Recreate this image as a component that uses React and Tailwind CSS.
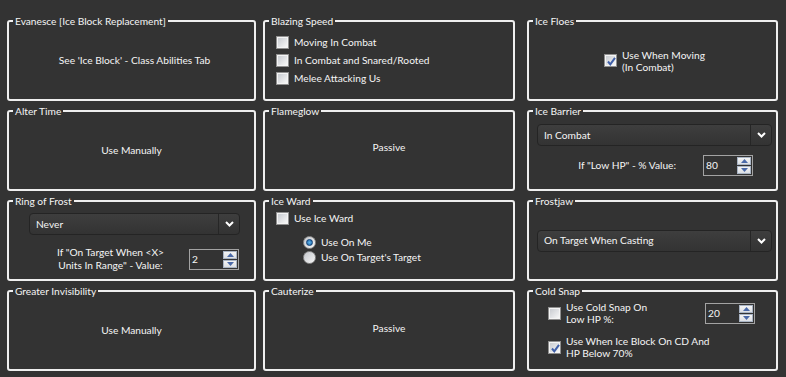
import React from "react";

function Check({ checked }) {
  return (
    <span className="relative flex h-[13px] w-[13px] shrink-0 items-center justify-center border border-[#8f8f8f] bg-[#f4f4f4] p-[1px]">
      <span className="block h-full w-full bg-linear-to-br from-[#c9ccd1] to-[#f7f7f7]" />
      {checked && (
        <svg className="absolute left-[1px] top-[1px]" width="11" height="11" viewBox="0 0 11 11">
          <path d="M2 5.5 L4.3 8.3 L9 1.8" fill="none" stroke="#3f5fa8" strokeWidth="2" />
        </svg>
      )}
    </span>
  );
}

function Radio({ checked }) {
  return (
    <span className="flex h-[13px] w-[13px] shrink-0 items-center justify-center rounded-full border border-[#8f8f8f] bg-linear-to-br from-[#c4c7cc] to-[#f5f5f5]">
      {checked && (
        <span className="block h-[7px] w-[7px] rounded-full border border-[#0e3f75] bg-radial from-[#5fb6ec] to-[#1a5d9e]" />
      )}
    </span>
  );
}

function Combo({ value, className }) {
  return (
    <div className={`flex h-[22px] items-stretch rounded-[4px] border border-[#242424] bg-linear-to-b from-[#3e3e3e] to-[#333333] ${className}`}>
      <div className="flex flex-1 items-center pl-[6px]">{value}</div>
      <div className="flex w-[21px] items-center justify-center border-l border-[#262626]">
        <svg width="9" height="6" viewBox="0 0 9 6">
          <path d="M1 1 L4.5 4.5 L8 1" fill="none" stroke="#ffffff" strokeWidth="2" />
        </svg>
      </div>
    </div>
  );
}

function Spin({ value }) {
  return (
    <div className="flex h-[21px] w-[50px] shrink-0 border border-[#a3a3a3] bg-[#333333]">
      <div className="flex flex-1 items-center pl-[2px]">{value}</div>
      <div className="flex w-[16px] flex-col gap-[1px] p-[1px]">
        <div className="flex flex-1 items-center justify-center border border-[#a9b4c4] bg-linear-to-b from-[#f4f4f4] to-[#dcdfe4]">
          <svg width="7" height="4" viewBox="0 0 7 4">
            <path d="M0 4 L3.5 0 L7 4 Z" fill="#4a69a8" />
          </svg>
        </div>
        <div className="flex flex-1 items-center justify-center border border-[#a9b4c4] bg-linear-to-b from-[#f4f4f4] to-[#dcdfe4]">
          <svg width="7" height="4" viewBox="0 0 7 4">
            <path d="M0 0 L7 0 L3.5 4 Z" fill="#4a69a8" />
          </svg>
        </div>
      </div>
    </div>
  );
}

function Box({ title, className, children }) {
  return (
    <div className={`relative h-[81px] shrink-0 rounded-[3px] border-2 border-[#efefef] ${className}`}>
      <span className="absolute left-[4px] top-[-8px] whitespace-nowrap bg-[#333333] px-[2px] leading-[14px]">
        {title}
      </span>
      {children}
    </div>
  );
}

export default function App() {
  return (
    <div
      className="flex h-[377px] w-[786px] flex-col gap-[9px] overflow-hidden bg-[#333333] pl-[7px] pt-[20px] text-[10.2px] leading-[13px] text-[#f5f5f5]"
      style={{ fontFamily: "Lato, 'Liberation Sans', sans-serif" }}
    >
      {/* Row 1 */}
      <div className="flex">
        <Box title="Evanesce [Ice Block Replacement]" className="w-[249px]">
          <div className="flex h-full items-center justify-center pl-[6px]">
            See 'Ice Block' - Class Abilities Tab
          </div>
        </Box>
        <Box title="Blazing Speed" className="ml-[7px] w-[252px]">
          <div className="flex flex-col pl-[11px] pt-[11px]">
            <div className="flex h-[18px] items-center gap-[5px]">
              <Check />
              <span>Moving In Combat</span>
            </div>
            <div className="flex h-[18px] items-center gap-[5px]">
              <Check />
              <span>In Combat and Snared/Rooted</span>
            </div>
            <div className="flex h-[18px] items-center gap-[5px]">
              <Check />
              <span>Melee Attacking Us</span>
            </div>
          </div>
        </Box>
        <Box title="Ice Floes" className="ml-[12px] w-[251px]">
          <div className="flex h-full items-center justify-center gap-[5px] pl-[4px]">
            <Check checked />
            <div className="leading-[12px]">
              Use When Moving
              <br />
              (In Combat)
            </div>
          </div>
        </Box>
      </div>

      {/* Row 2 */}
      <div className="flex">
        <Box title="Alter Time" className="w-[249px]">
          <div className="flex h-full items-center justify-center">Use Manually</div>
        </Box>
        <Box title="Flameglow" className="ml-[7px] w-[252px]">
          <div className="flex h-full items-center justify-center pb-[7px]">Passive</div>
        </Box>
        <Box title="Ice Barrier" className="ml-[12px] w-[251px]">
          <div className="flex flex-col pt-[12px]">
            <Combo value="In Combat" className="ml-[8px] mr-[4px]" />
            <div className="mt-[9px] flex items-center justify-end gap-[27px] pr-[23px]">
              <span>If "Low HP" - % Value:</span>
              <Spin value="80" />
            </div>
          </div>
        </Box>
      </div>

      {/* Row 3 */}
      <div className="flex">
        <Box title="Ring of Frost" className="w-[249px]">
          <div className="flex flex-col pt-[11px]">
            <Combo value="Never" className="ml-[20px] mr-[14px]" />
            <div className="mt-[11px] flex items-center justify-end gap-[25px] pr-[15px]">
              <span className="text-center leading-[13px]">
                If "On Target When &lt;X&gt;
                <br />
                Units In Range" - Value:
              </span>
              <Spin value="2" />
            </div>
          </div>
        </Box>
        <Box title="Ice Ward" className="ml-[7px] w-[252px]">
          <div className="flex flex-col pl-[11px] pt-[7px]">
            <div className="flex h-[18px] items-center gap-[5px]">
              <Check />
              <span>Use Ice Ward</span>
            </div>
            <div className="mt-[8px] flex flex-col pl-[27px]">
              <div className="flex h-[15px] items-center gap-[5px]">
                <Radio checked />
                <span>Use On Me</span>
              </div>
              <div className="flex h-[15px] items-center gap-[5px]">
                <Radio />
                <span>Use On Target's Target</span>
              </div>
            </div>
          </div>
        </Box>
        <Box title="Frostjaw" className="ml-[12px] w-[251px]">
          <div className="flex h-full flex-col justify-center">
            <Combo value="On Target When Casting" className="ml-[8px] mr-[4px]" />
          </div>
        </Box>
      </div>

      {/* Row 4 */}
      <div className="flex">
        <Box title="Greater Invisibility" className="w-[249px]">
          <div className="flex h-full items-center justify-center">Use Manually</div>
        </Box>
        <Box title="Cauterize" className="ml-[7px] w-[252px]">
          <div className="flex h-full items-center justify-center pb-[5px]">Passive</div>
        </Box>
        <Box title="Cold Snap" className="ml-[12px] w-[251px]">
          <div className="flex flex-col pl-[19px] pt-[9px]">
            <div className="flex h-[24px] items-center">
              <Check />
              <span className="ml-[5px] leading-[12px]">
                Use Cold Snap On
                <br />
                Low HP %:
              </span>
              <div className="ml-auto mr-[21px]">
                <Spin value="20" />
              </div>
            </div>
            <div className="mt-[10px] flex h-[24px] items-center">
              <Check checked />
              <span className="ml-[5px] leading-[12px]">
                Use When Ice Block On CD And
                <br />
                HP Below 70%
              </span>
            </div>
          </div>
        </Box>
      </div>
    </div>
  );
}
